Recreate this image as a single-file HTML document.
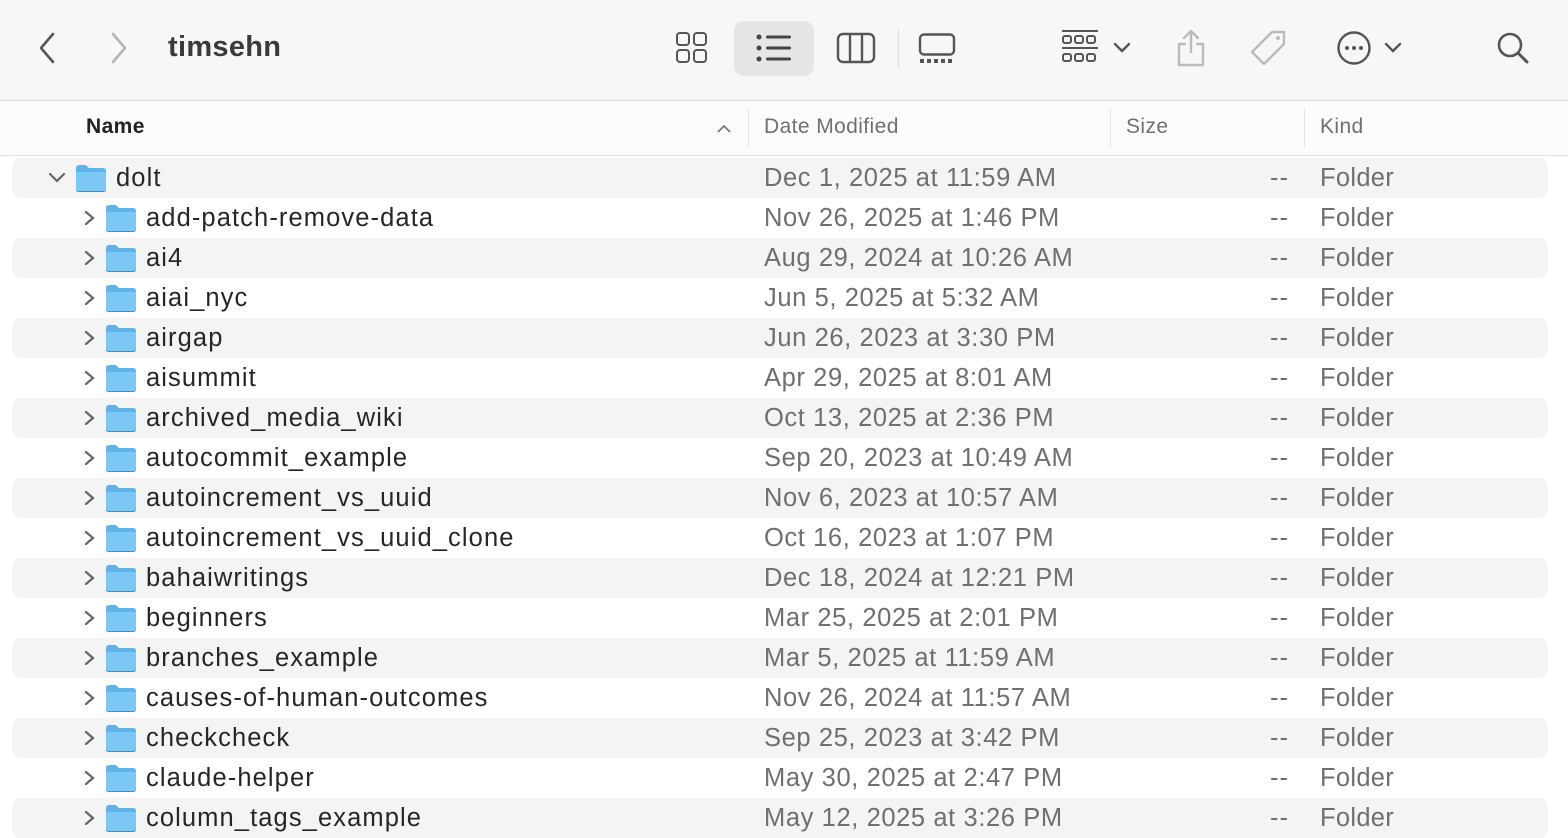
<!DOCTYPE html><html><head><style>
*{margin:0;padding:0;box-sizing:border-box}
body{width:1568px;height:838px;overflow:hidden;background:#fff;font-family:"Liberation Sans",sans-serif;position:relative}
.tb{position:absolute;left:0;top:0;width:1568px;height:101px;background:#f7f7f7;border-bottom:1px solid #dcdcdc}
.title{position:absolute;left:168px;top:31px;font-size:29px;font-weight:bold;color:#3a3a3a;letter-spacing:0.3px}
.hdr{position:absolute;left:0;top:101px;width:1568px;height:55px;background:#fcfcfc;border-bottom:1px solid #dedede;font-size:21px;color:#707070;letter-spacing:0.4px}
.hdr span{position:absolute;top:14px}
.sep{position:absolute;top:8px;width:1px;height:38px;background:#e2e2e2}
.row{position:absolute;left:12px;width:1536px;height:40px;border-radius:9px;font-size:25.5px;line-height:40px}
.g{background:#f4f4f4}
.row .n{position:absolute;color:#262626;letter-spacing:1.1px}
.row .d{position:absolute;left:752px;color:#6f6f6f;letter-spacing:0.6px}
.row .s{position:absolute;left:1258px;color:#6f6f6f;letter-spacing:1px}
.row .k{position:absolute;left:1308px;color:#6f6f6f;letter-spacing:0.3px}
.ch{position:absolute;top:12px}
.fo{position:absolute;top:6px}
svg{display:block}
</style></head><body>
<div class="tb">
<svg style="position:absolute;left:36px;top:31px" width="24" height="34"><path d="M17 3 L5 17 L17 31" stroke="#555" stroke-width="2.6" fill="none" stroke-linecap="round" stroke-linejoin="round"/></svg>
<svg style="position:absolute;left:106px;top:31px" width="24" height="34"><path d="M7 3 L19 17 L7 31" stroke="#b5b5b5" stroke-width="2.6" fill="none" stroke-linecap="round" stroke-linejoin="round"/></svg>
<div class="title">timsehn</div>
<svg style="position:absolute;left:676px;top:32px" width="32" height="32"><g fill="none" stroke="#555" stroke-width="2"><rect x="1" y="1" width="12" height="12" rx="3"/><rect x="18" y="1" width="12" height="12" rx="3"/><rect x="1" y="18" width="12" height="12" rx="3"/><rect x="18" y="18" width="12" height="12" rx="3"/></g></svg>
<div style="position:absolute;left:734px;top:21px;width:80px;height:55px;background:#e6e6e6;border-radius:10px"></div>
<svg style="position:absolute;left:756px;top:34px" width="36" height="28"><g fill="#444"><circle cx="3" cy="3" r="2.5"/><circle cx="3" cy="14" r="2.5"/><circle cx="3" cy="25" r="2.5"/><rect x="10" y="1.5" width="25" height="3" rx="1.5"/><rect x="10" y="12.5" width="25" height="3" rx="1.5"/><rect x="10" y="23.5" width="25" height="3" rx="1.5"/></g></svg>
<svg style="position:absolute;left:836px;top:32px" width="40" height="32"><g fill="none" stroke="#555" stroke-width="2.4"><rect x="2" y="2" width="36" height="28" rx="5"/><path d="M14 2V30M26 2V30"/></g></svg>
<div style="position:absolute;left:898px;top:29px;width:1px;height:40px;background:#ddd"></div>
<svg style="position:absolute;left:918px;top:33px" width="40" height="30"><rect x="2" y="1.5" width="34" height="20" rx="4" fill="none" stroke="#555" stroke-width="2.4"/><g fill="#555"><rect x="2" y="26" width="4" height="4"/><rect x="9" y="26" width="4" height="4"/><rect x="16" y="26" width="4" height="4"/><rect x="23" y="26" width="4" height="4"/><rect x="30" y="26" width="4" height="4"/></g></svg>
<svg style="position:absolute;left:1060px;top:29px" width="40" height="38"><g fill="none" stroke="#555" stroke-width="2"><path d="M2 2H38M2 19H38"/><rect x="3" y="7" width="8" height="7" rx="2"/><rect x="15" y="7" width="8" height="7" rx="2"/><rect x="27" y="7" width="8" height="7" rx="2"/><rect x="3" y="25" width="8" height="7" rx="2"/><rect x="15" y="25" width="8" height="7" rx="2"/><rect x="27" y="25" width="8" height="7" rx="2"/></g></svg>
<svg style="position:absolute;left:1113px;top:42px" width="18" height="12"><path d="M2 2L9 9L16 2" stroke="#555" stroke-width="2.4" fill="none" stroke-linecap="round"/></svg>
<svg style="position:absolute;left:1174px;top:28px" width="34" height="40"><g fill="none" stroke="#bbb" stroke-width="2.4" stroke-linecap="round" stroke-linejoin="round"><path d="M17 3V24M10 10L17 3L24 10"/><path d="M11 16H5V37H29V16H23"/></g></svg>
<svg style="position:absolute;left:1248px;top:28px" width="42" height="42"><path d="M24 4H36V16L16 36L4 24Z" fill="none" stroke="#bbb" stroke-width="2.4" stroke-linejoin="round"/><circle cx="30" cy="10" r="2" fill="#bbb"/></svg>
<svg style="position:absolute;left:1336px;top:30px" width="36" height="36"><circle cx="18" cy="18" r="15.5" fill="none" stroke="#555" stroke-width="2.4"/><g fill="#555"><circle cx="11" cy="18" r="2"/><circle cx="18" cy="18" r="2"/><circle cx="25" cy="18" r="2"/></g></svg>
<svg style="position:absolute;left:1384px;top:42px" width="18" height="12"><path d="M2 2L9 9L16 2" stroke="#555" stroke-width="2.4" fill="none" stroke-linecap="round"/></svg>
<svg style="position:absolute;left:1496px;top:31px" width="34" height="34"><circle cx="14" cy="14" r="11" fill="none" stroke="#555" stroke-width="2.6"/><path d="M22 22L31 31" stroke="#555" stroke-width="3" stroke-linecap="round"/></svg>
</div>
<div class="hdr">
<span style="left:86px;color:#222;font-weight:bold">Name</span>
<svg style="position:absolute;left:716px;top:23px" width="16" height="10"><path d="M2 8L8 2L14 8" stroke="#777" stroke-width="1.8" fill="none"/></svg>
<div class="sep" style="left:748px"></div>
<span style="left:764px">Date Modified</span>
<div class="sep" style="left:1110px"></div>
<span style="left:1126px">Size</span>
<div class="sep" style="left:1304px"></div>
<span style="left:1320px">Kind</span>
</div>
<div id="rows"></div>
<script>
const d=[["dolt","Dec 1, 2025 at 11:59 AM"],["add-patch-remove-data","Nov 26, 2025 at 1:46 PM"],["ai4","Aug 29, 2024 at 10:26 AM"],["aiai_nyc","Jun 5, 2025 at 5:32 AM"],["airgap","Jun 26, 2023 at 3:30 PM"],["aisummit","Apr 29, 2025 at 8:01 AM"],["archived_media_wiki","Oct 13, 2025 at 2:36 PM"],["autocommit_example","Sep 20, 2023 at 10:49 AM"],["autoincrement_vs_uuid","Nov 6, 2023 at 10:57 AM"],["autoincrement_vs_uuid_clone","Oct 16, 2023 at 1:07 PM"],["bahaiwritings","Dec 18, 2024 at 12:21 PM"],["beginners","Mar 25, 2025 at 2:01 PM"],["branches_example","Mar 5, 2025 at 11:59 AM"],["causes-of-human-outcomes","Nov 26, 2024 at 11:57 AM"],["checkcheck","Sep 25, 2023 at 3:42 PM"],["claude-helper","May 30, 2025 at 2:47 PM"],["column_tags_example","May 12, 2025 at 3:26 PM"]];
const fo='<svg width="32" height="28"><path d="M1 4Q1 1 4 1H11L14 4H28Q31 4 31 7V24Q31 27 28 27H4Q1 27 1 24Z" fill="#5fb4ec"/><path d="M1 8H31V24Q31 27 28 27H4Q1 27 1 24Z" fill="#7cc8f5"/><path d="M1 24Q1 27 4 27H28Q31 27 31 24V25Q31 28 28 28H4Q1 28 1 25Z" fill="#3d8fd0"/></svg>';
let h='';
d.forEach((r,i)=>{const top=158+i*40;const sub=i>0;const cx=sub?70:36;const fx=sub?93:63;const nx=sub?134:104;
const ch=sub?'<svg class="ch" style="left:'+cx+'px" width="14" height="16"><path d="M4 2L11 8L4 14" stroke="#666" stroke-width="2.2" fill="none" stroke-linecap="round"/></svg>':'<svg class="ch" style="left:'+cx+'px;top:13px" width="18" height="14"><path d="M2 3L9 10L16 3" stroke="#666" stroke-width="2.2" fill="none" stroke-linecap="round"/></svg>';
h+='<div class="row'+(i%2==0?' g':'')+'" style="top:'+top+'px">'+ch+'<div class="fo" style="left:'+fx+'px">'+fo+'</div><span class="n" style="left:'+nx+'px">'+r[0]+'</span><span class="d">'+r[1]+'</span><span class="s">--</span><span class="k">Folder</span></div>';});
document.getElementById('rows').innerHTML=h;
</script>
</body></html>
